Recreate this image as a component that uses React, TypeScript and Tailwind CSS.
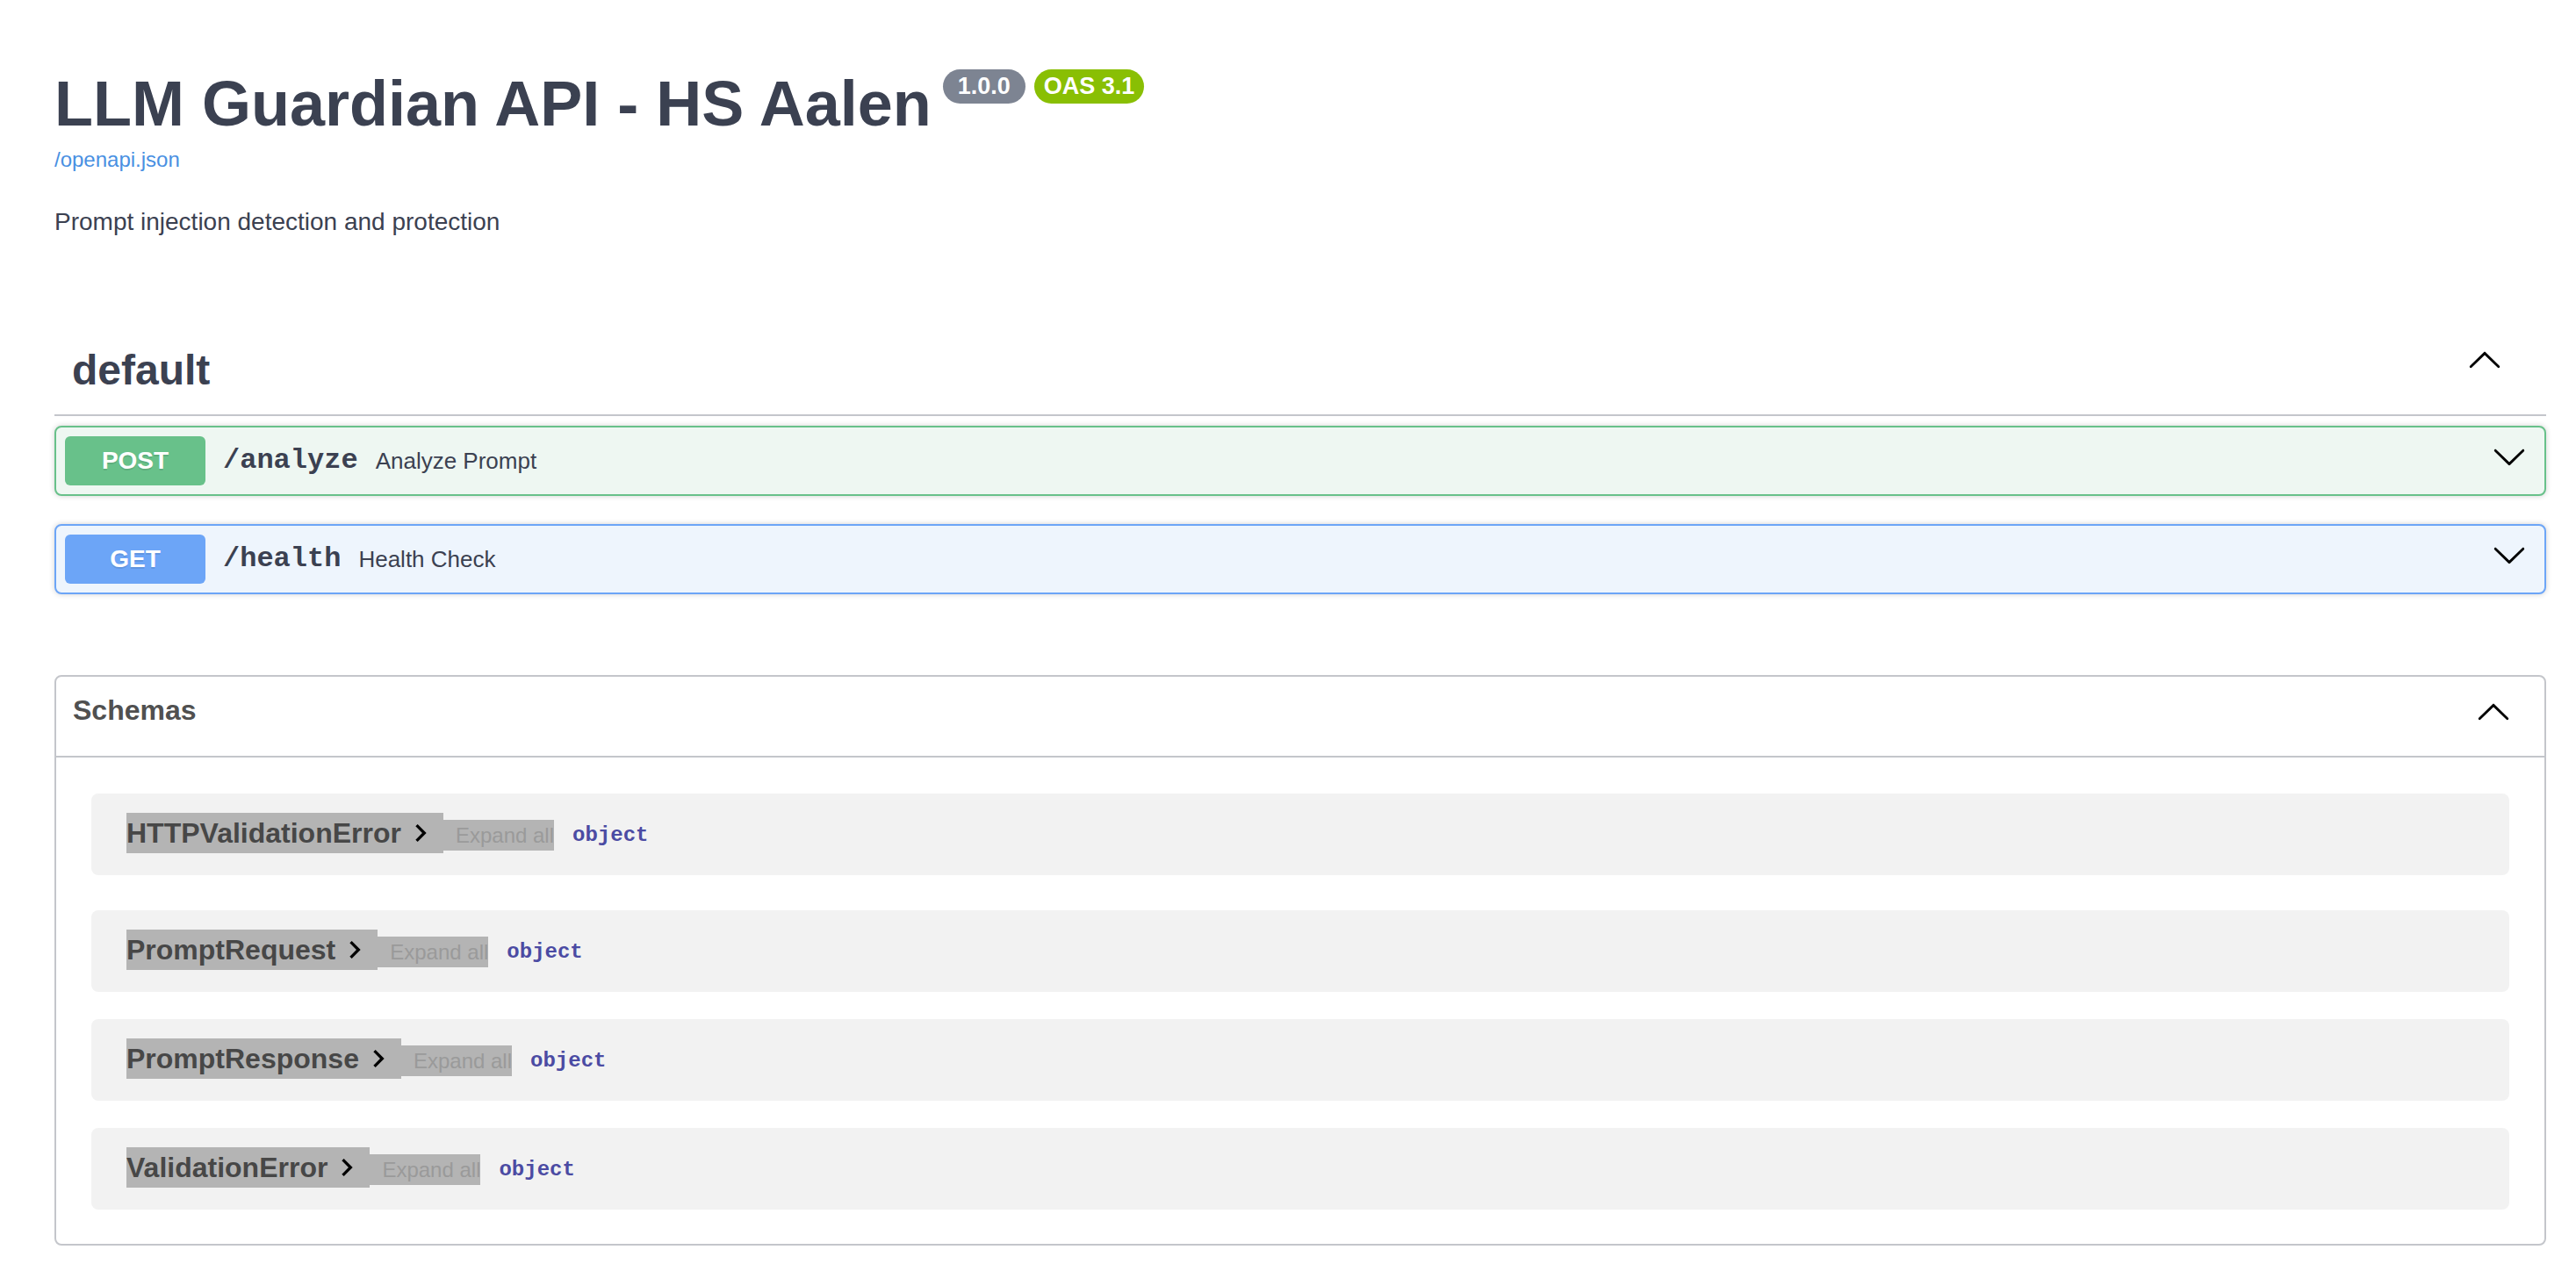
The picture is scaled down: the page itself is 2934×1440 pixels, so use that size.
import React from 'react';

const arrowPath =
  'M17.418 6.109c.272-.268.709-.268.979 0s.271.701 0 .969l-7.908 7.83c-.27.268-.707.268-.979 0l-7.908-7.83c-.27-.268-.27-.701 0-.969.271-.268.709-.268.979 0L10 13.25l7.418-7.141z';

function ArrowDown({ className }: { className?: string }) {
  return (
    <svg viewBox="0 0 20 20" width="40" height="40" className={className}>
      <path d={arrowPath} fill="#000" />
    </svg>
  );
}

function ArrowUp({ className }: { className?: string }) {
  return (
    <svg viewBox="0 0 20 20" width="40" height="40" className={className}>
      <path d={arrowPath} fill="#000" transform="rotate(180 10 10)" />
    </svg>
  );
}

function ModelToggle() {
  return (
    <svg viewBox="0 0 24 24" width="40" height="40" className="ml-[2px] shrink-0">
      <path d="M10 6L8.59 7.41 13.17 12l-4.58 4.59L10 18l6-6z" fill="#000" />
    </svg>
  );
}

const ops = [
  {
    method: 'POST',
    path: '/analyze',
    summary: 'Analyze Prompt',
    row: 'border-[#68c18a] bg-[#eef7f2]',
    badge: 'bg-[#68c18a]',
    gap: 'mt-0',
  },
  {
    method: 'GET',
    path: '/health',
    summary: 'Health Check',
    row: 'border-[#6ca5f7] bg-[#eef5fd]',
    badge: 'bg-[#6ca5f7]',
    gap: 'mt-[32px]',
  },
];

const schemas = [
  { name: 'HTTPValidationError', gap: 'mt-[41px]' },
  { name: 'PromptRequest', gap: 'mt-[40px]' },
  { name: 'PromptResponse', gap: 'mt-[31px]' },
  { name: 'ValidationError', gap: 'mt-[31px]' },
];

export default function App() {
  return (
    <div className="min-h-screen bg-white font-['Liberation_Sans',Arial,sans-serif] text-[#3b4151]">
      <div className="ml-[62px] w-[2838px] pt-[78px] pb-[40px]">
        {/* info */}
        <div className="flex items-start">
          <h2 className="text-[72px] leading-[80px] font-bold text-[#3b4151]">LLM Guardian API - HS Aalen</h2>
          <span className="ml-[13px] mt-[1px] flex h-[39px] items-center rounded-full bg-[#7d8492] px-[17px] text-[27px] font-bold text-white">
            1.0.0
          </span>
          <span className="ml-[10px] mt-[1px] flex h-[39px] items-center rounded-full bg-[#89bf04] px-[11px] text-[27px] font-bold text-white">
            OAS 3.1
          </span>
        </div>
        <a className="mt-[10px] block text-[24px] leading-[28px] text-[#4990e2]">/openapi.json</a>
        <p className="mt-[36px] text-[28px] leading-[42px] text-[#3b4151]">Prompt injection detection and protection</p>

        {/* default tag */}
        <div className="mt-[98px] flex h-[102px] items-center border-b-2 border-[#c4c6cb] pl-[20px] pr-[50px]">
          <h3 className="text-[48px] leading-[56px] font-bold text-[#3b4151]">default</h3>
          <ArrowUp className="ml-auto mb-[22px]" />
        </div>

        <div className="mt-[11px]">
          {ops.map((op) => (
            <div
              key={op.path}
              className={`${op.gap} ${op.row} flex items-center rounded-[8px] border-2 p-[10px] shadow-[0_0_6px_rgba(0,0,0,0.19)]`}
            >
              <span
                className={`${op.badge} flex h-[56px] w-[160px] items-center justify-center rounded-[6px] text-[28px] font-bold text-white [text-shadow:0_2px_0_rgba(0,0,0,0.1)]`}
              >
                {op.method}
              </span>
              <span className="px-[20px] font-['Liberation_Mono','Courier_New',monospace] text-[32px] font-bold text-[#3b4151]">
                {op.path}
              </span>
              <span className="text-[26px] text-[#3b4151]">{op.summary}</span>
              <ArrowDown className="ml-auto mr-[10px] mb-[10px]" />
            </div>
          ))}
        </div>

        {/* schemas */}
        <section className="mt-[92px] rounded-[8px] border-2 border-[#c4c6cb] pb-[39px]">
          <div className="flex items-start border-b-2 border-[#c4c6cb] pt-[18px] pb-[29px] pl-[19px] pr-[38px]">
            <h4 className="text-[32px] leading-[40px] font-bold text-[#505050]">Schemas</h4>
            <ArrowUp className="ml-auto mt-[3px]" />
          </div>
          {schemas.map((s) => (
            <div key={s.name} className={`${s.gap} mx-[40px] h-[93px] rounded-[8px] bg-[#f2f2f2] pl-[40px] pt-[22px]`}>
              <div className="flex items-start">
                <span className="flex h-[46px] items-center bg-[#b4b4b4] pr-[6px]">
                  <span className="text-[32px] font-bold text-[#474747]">{s.name}</span>
                  <ModelToggle />
                </span>
                <span className="mt-[8px] flex h-[35px] items-center bg-[#b4b4b4] pl-[14px] text-[24px] text-[#9a9a9a]">
                  Expand all
                </span>
                <span className="ml-[21px] mt-[12px] font-['Liberation_Mono','Courier_New',monospace] text-[24px] leading-[28px] font-bold text-[#4b4ba3]">
                  object
                </span>
              </div>
            </div>
          ))}
        </section>
      </div>
    </div>
  );
}
